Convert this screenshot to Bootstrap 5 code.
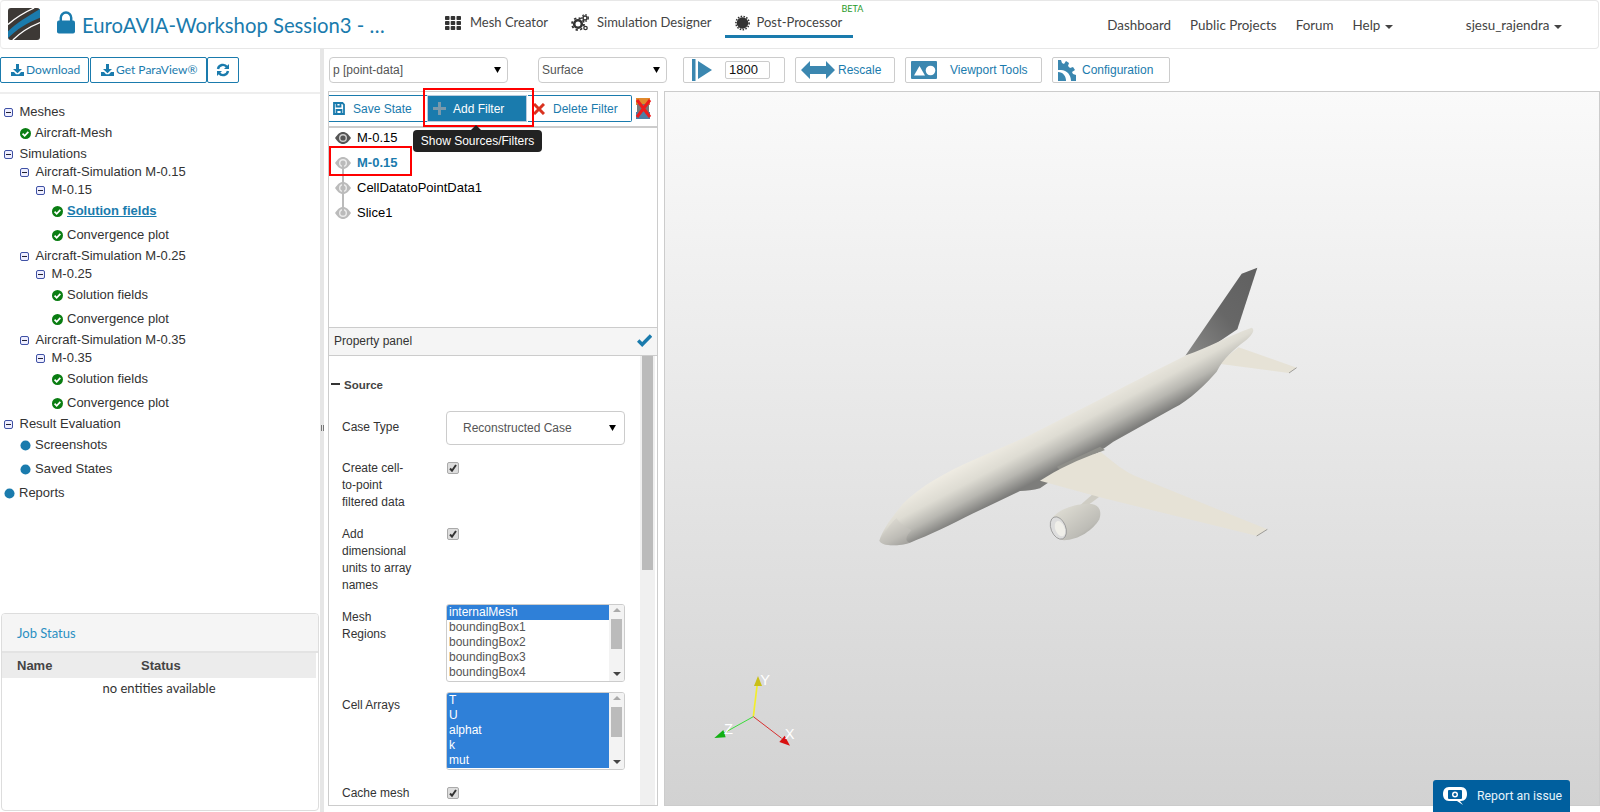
<!DOCTYPE html>
<html lang="en">
<head>
<meta charset="utf-8">
<title>Post-Processor</title>
<link href="https://cdn.jsdelivr.net/npm/bootstrap@5.3.0/dist/css/bootstrap.min.css" rel="stylesheet">
<style>
:root{--brand:#1a7bad;--ico:#3b87b0;}
html,body{height:100%;}
body{font-family:"Liberation Sans",Arial,sans-serif;font-size:13px;color:#333;background:#fff;overflow:hidden;}
svg{display:block;flex:none;}
.appbar{height:49px;padding:0;border:1px solid #e7e7e7;border-left-color:#eee;border-radius:4px;margin-right:1px;font-family:Lato,sans-serif;font-size:13px;color:#444;flex-wrap:nowrap;justify-content:flex-start;align-items:flex-start;}
.appbar>*{flex:none;}
.logo-box{margin:7px 0 0 7px;}
.lock-box{margin:10px 0 0 17px;}
.app-title{margin:8px 0 0 7px;width:363px;font-size:20.3px;line-height:32px;color:var(--brand);white-space:nowrap;}
.mod{display:flex;align-items:center;height:37px;padding:7px 0 0;color:#444;text-decoration:none;position:relative;white-space:nowrap;}
.mod-a{gap:9px;}
.mod-b{margin-left:23px;gap:8px;}
.mod-c{margin-left:13px;padding:10px 11px 0 10px;border-bottom:3px solid var(--brand);gap:7px;}
.beta{position:absolute;left:117px;top:3px;font-size:9px;line-height:10px;color:#2a9a2a;}
.rnav{display:flex;gap:19px;margin-left:254px;padding-top:15px;line-height:18px;font-size:13.4px;}
.rnav a{color:#444;text-decoration:none;white-space:nowrap;}
.user{margin-left:72.5px;padding-top:15px;line-height:18px;white-space:nowrap;font-size:13.4px;}
.car{display:inline-block;border:4px solid transparent;border-top-color:#444;border-bottom:0;margin-left:5px;vertical-align:middle;}
.main-wrap{height:763px;}
.side{width:320px;flex:none;}
.side-tools{height:45px;border-bottom:2px solid #eee;padding-top:8px;gap:1px;}
.sbtn{height:26px;padding:0 0 0 10px;font-family:Lato,sans-serif;font-size:12px;line-height:24px;color:var(--brand);border:1px solid var(--brand);border-radius:2px;display:flex;align-items:center;gap:2px;background:#fff;}
.sbtn-a{width:89px;}
.sbtn-b{width:117px;}
.sbtn-c{width:32px;margin-left:-1px;padding-left:8px;}
.treebox{padding-top:9px;}
.folder,.leaf{display:flex;align-items:center;white-space:nowrap;}
.folder{height:18px;}
.leaf{height:24px;}
.l0{padding-left:4px;}
.l1{padding-left:20px;}
.l2{padding-left:36px;}
.l3{padding-left:52px;}
.folder svg{margin-right:6.500px;}
.leaf svg{margin-right:4px;}
.cur{font-weight:700;color:var(--brand);text-decoration:underline;margin-left:-4px;padding-left:4px;}
.jobs{height:198px;margin:auto 0 1px 1px;width:318px;border:1px solid #ddd;border-radius:4px;overflow:hidden;}
.jobs-h{height:39px;background:#f5f5f5;border-bottom:2px solid #e3e3e3;color:#2b8fc2;font-family:Lato,sans-serif;font-size:13px;line-height:38px;padding-left:15px;}
.jobs-th{height:25px;background:#ececec;font-weight:700;color:#444;line-height:25px;padding-left:15px;margin-right:2px;}
.jobs-th span{display:inline-block;width:124px;}
.jobs-td{text-align:center;font-family:Lato,sans-serif;font-size:13px;line-height:18px;color:#333;padding-top:1px;margin-right:2px;}
.strip{width:4px;flex:none;background:#e6e6e6;display:flex;align-items:center;justify-content:center;}
.strip i{display:block;width:3px;height:6px;border-left:1px solid #777;border-right:1px solid #777;margin-top:-5px;}
.work{margin-left:4px;min-width:0;}
.top-tools{height:42px;padding-top:8px;margin-left:1px;}
.wsel{height:26px;border:1px solid #ccc;border-radius:4px;font-size:12px;color:#555;padding:0 0 0 3px;background-position:right 6px center;background-size:7px 6px;box-shadow:none;}
.wsel-a{width:179px;}
.wsel-b{width:129px;margin-left:30px;}
.form-select{background-image:url("data:image/svg+xml,%3Csvg xmlns='http://www.w3.org/2000/svg' viewBox='0 0 8 7'%3E%3Cpath d='M0 0h8L4 7z'/%3E%3C/svg%3E");}
.tbtn{height:26px;border:1px solid #ccc;border-radius:2px;background:#fff;display:flex;align-items:center;font-size:12px;color:var(--brand);white-space:nowrap;}
.tb-a{width:102px;margin-left:16px;padding-left:8px;}
.tb-b{width:100px;margin-left:10px;padding-left:5px;gap:3px;}
.tb-c{width:137px;margin-left:10px;padding-left:5px;gap:13px;}
.tb-d{width:118px;margin-left:10px;padding-left:5px;gap:4px;}
.num{width:45px;height:18px;margin-left:13px;border:1px solid #ccc;border-radius:2px;font-size:13px;line-height:16px;color:#111;padding-left:3px;}
.stage{height:715px;position:relative;}
.filters{width:330px;flex:none;border:1px solid #ccc;}
.ftools{height:36px;border-bottom:2px solid #ccc;padding-top:3px;}
.fb{height:27px;display:flex;align-items:center;font-size:12px;color:var(--brand);border:1px solid var(--brand);white-space:nowrap;padding:0;}
.fb-a{width:98px;border-width:1px 0;padding-left:4px;gap:8px;}
.fb-b{width:100px;background:var(--brand);color:#fff;padding-left:5px;gap:7px;border-color:#bcd;}
.fb-c{width:104px;margin-left:1px;padding-left:5px;gap:8px;border-left:0;border-radius:0 2px 2px 0;}
.fb-x{margin-left:3px;margin-top:3px;}
.flist{height:202px;margin-top:-3px;position:relative;}
.fitem{height:25px;display:flex;align-items:center;gap:6px;padding-left:6px;color:#000;position:relative;}
.fitem-cur{font-weight:700;color:var(--brand);}
.flink{position:absolute;left:13px;top:37px;height:50px;width:2px;background:#bbb;}
.ph{height:29px;background:#f5f5f5;border-top:1px solid #ccc;border-bottom:1px solid #ccc;font-size:12px;line-height:27px;color:#333;padding:0 5px;}
.ph svg{margin-top:6px;}
.pscroll{height:449px;overflow:hidden;position:relative;padding-right:16px;}
.vbar{position:absolute;right:2px;top:0;bottom:0;width:15px;background:#f0f0f0;}
.vbar i{display:block;margin-left:2px;width:11px;height:214px;background:#bbb;}
.src{font-weight:700;font-size:11.5px;color:#444;padding:20px 0 0 2px;height:55px;line-height:18px;display:flex;align-items:flex-start;gap:4px;}
.src i{display:block;width:9px;height:2px;background:#333;margin-top:7px;}
.prow{display:flex;padding-left:13px;font-size:12px;line-height:17px;color:#333;}
.plab{width:104px;flex:none;padding:1px 32px 0 0;margin-bottom:-1px;}
.pval{width:179px;flex:none;}
.psel{height:34px;width:179px;font-size:12px;color:#555;border:1px solid #ccc;border-radius:4px;padding:0 0 0 16px;background-position:right 8px center;background-size:7px 6px;}
.r-case{margin-bottom:14px;}
.r-case .plab{padding-top:8px;}
.r-chk1{margin-bottom:15px;}
.r-chk2{margin-bottom:11px;}
.r-mesh{margin-bottom:10px;}
.r-mesh .plab{padding-top:5px;}
.r-cell{margin-bottom:14px;}
.r-cell .plab{padding-top:5px;}
.form-check-input.tick,.form-check-input.tick:checked{width:12px;height:12px;margin:3px 0 0 1px;border:1px solid #aaa;border-radius:2px;background-color:#ddd;background-size:12px 12px;background-image:url("data:image/svg+xml,%3Csvg xmlns='http://www.w3.org/2000/svg' viewBox='0 0 12 12'%3E%3Cpath d='M3 6.500l2 2.200L9 3' fill='none' stroke='%23333' stroke-width='2'/%3E%3C/svg%3E");display:block;}
.lbox{height:78px;border:1px solid #ccc;border-radius:3px;position:relative;overflow:hidden;font-size:12px;line-height:15px;color:#555;padding-right:15px;}
.lbox div{padding-left:2px;height:15px;}
.lbox .on{background:#2f80d8;color:#fff;}
.lsb{position:absolute;right:0;top:0;bottom:0;width:15px;background:#f3f3f3;}
.lsb b{position:absolute;left:2px;top:14px;width:11px;height:30px;background:#bbb;}
.lsb i{position:absolute;left:4px;border:4px solid transparent;}
.lsb .up{top:3px;border-bottom-color:#aaa;border-top:0;}
.lsb .dn{bottom:5px;border-top-color:#444;border-bottom:0;}
.view{margin-left:6px;width:936px;flex:none;border:1px solid #ccc;position:relative;background:linear-gradient(#fafafa,#d2d2d2);overflow:hidden;}
.plane{position:absolute;left:175px;top:148px;}
.axes{position:absolute;left:15px;top:558px;}
.redbox{position:absolute;border:2px solid #f00;pointer-events:none;}
.rb-a{left:95px;top:-3px;width:111px;height:39px;}
.rb-b{left:1px;top:55px;width:83px;height:30px;}
.tipx{position:absolute;left:85px;top:39px;width:129px;height:22px;border-radius:4px;background:#222;color:#fff;font-size:12px;line-height:22px;text-align:center;}
.tipx::before{content:"";position:absolute;left:58px;top:-5px;border:5px solid transparent;border-top:0;border-bottom-color:#222;}
.report{position:absolute;left:1433px;top:780px;width:137px;height:32px;background:#005f9e;border-radius:3px 3px 0 0;color:#e6f3fb;font-family:Roboto,sans-serif;font-size:12.3px;display:flex;align-items:center;gap:10px;padding-left:10px;}
</style>
</head>
<body>
<nav class="navbar bg-white appbar">
  <div class="logo-box">
    <svg width="32" height="32" viewBox="0 0 33 33"><rect width="33" height="33" rx="3" fill="#3d3936"/><path d="M0 24C9 15 20 9 33 1V10C20 15 9 22 0 31Z" fill="#1a7bad"/><path d="M0 17C8 10 16 5 27 0" stroke="#fff" stroke-width="1.400" fill="none"/><path d="M5 33C13 25 23 19 33 15" stroke="#fff" stroke-width="1.400" fill="none"/></svg>
  </div>
  <div class="lock-box">
    <svg width="18" height="23" viewBox="0 0 19 23"><path d="M4 11V6.500a5.500 5.500 0 0 1 11 0V11" fill="none" stroke="#1a7bad" stroke-width="2.600"/><rect y="9.500" width="19" height="13.500" rx="2" fill="#1a7bad"/></svg>
  </div>
  <div class="app-title">EuroAVIA-Workshop Session3 - …</div>
  <a class="mod mod-a" href="#">
    <svg width="16" height="14" viewBox="0 0 16 14" fill="#333"><rect width="4.500" height="4" rx=".8"/><rect x="5.700" width="4.500" height="4" rx=".8"/><rect x="11.500" width="4.500" height="4" rx=".8"/><rect y="5" width="4.500" height="4" rx=".8"/><rect x="5.700" y="5" width="4.500" height="4" rx=".8"/><rect x="11.500" y="5" width="4.500" height="4" rx=".8"/><rect y="10" width="4.500" height="4" rx=".8"/><rect x="5.700" y="10" width="4.500" height="4" rx=".8"/><rect x="11.500" y="10" width="4.500" height="4" rx=".8"/></svg>
    Mesh Creator</a>
  <a class="mod mod-b" href="#">
    <svg width="18" height="18" viewBox="0 0 18 18" fill="none" stroke="#333"><circle cx="7" cy="10" r="3.800" stroke-width="2.600"/><circle cx="7" cy="10" r="6" stroke-width="1.800" stroke-dasharray="2.300 2.400"/><circle cx="14" cy="4" r="2" stroke-width="1.500"/><circle cx="14" cy="4" r="3.300" stroke-width="1.300" stroke-dasharray="1.500 1.600"/><circle cx="14.500" cy="14" r="1.700" stroke-width="1.300"/></svg>
    Simulation Designer</a>
  <a class="mod mod-c" href="#">
    <svg width="15" height="16" viewBox="0 0 15 16"><circle cx="7.500" cy="8" r="5.800" fill="#333"/><circle cx="7.500" cy="8" r="6.600" fill="none" stroke="#333" stroke-width="1.600" stroke-dasharray="1.500 1.400"/></svg>
    Post-Processor<span class="beta">BETA</span></a>
  <div class="rnav"><a href="#">Dashboard</a><a href="#">Public Projects</a><a href="#">Forum</a><a href="#">Help<span class="car"></span></a></div>
  <div class="user">sjesu_rajendra<span class="car"></span></div>
</nav>

<svg width="0" height="0" class="position-absolute">
  <symbol id="mn" viewBox="0 0 9 9"><rect x=".5" y=".5" width="8" height="8" rx="1.500" fill="#eef" stroke="#3f51a5"/><path d="M2 4.500h5" stroke="#223" stroke-width="1"/></symbol>
  <symbol id="ok" viewBox="0 0 12 12"><circle cx="6" cy="6" r="6" fill="#0a7d12"/><path d="M2.800 6.200l2.300 2.300 4-4.300" fill="none" stroke="#fff" stroke-width="1.900"/></symbol>
  <symbol id="dot" viewBox="0 0 12 12"><circle cx="6" cy="6" r="5.500" fill="#1a7bad"/></symbol>
  <symbol id="dl" viewBox="0 0 13 12"><path d="M5 0h3v5h3L6.500 9.300 2 5h3z" fill="#1a7bad"/><path d="M0 8h3l2 2.300h3L10 8h3v4H0z" fill="#1a7bad"/></symbol>
  <symbol id="eye" viewBox="0 0 16 14"><path d="M0 7C3 2.500 5.500 1 8 1s5 1.500 8 6c-3 4.500-5.500 6-8 6S3 11.500 0 7z" fill="currentColor"/><circle cx="8" cy="7" r="4" fill="#fff" opacity=".7"/><circle cx="8" cy="7" r="2.600" fill="currentColor"/></symbol>
</svg>

<div class="d-flex main-wrap">
  <aside class="side d-flex flex-column">
    <div class="side-tools d-flex">
      <button class="sbtn sbtn-a" type="button"><svg width="13" height="12"><use href="#dl"/></svg>Download</button>
      <button class="sbtn sbtn-b" type="button"><svg width="13" height="12"><use href="#dl"/></svg>Get ParaView®</button>
      <button class="sbtn sbtn-c" type="button"><svg width="14" height="14" viewBox="0 0 14 14" fill="none" stroke="#1a7bad" stroke-width="2.400"><path d="M2 6a5 5 0 0 1 9-2"/><path d="M12 8a5 5 0 0 1-9 2"/><path d="M13 1v5H8z" fill="#1a7bad" stroke="none"/><path d="M1 13V8h5z" fill="#1a7bad" stroke="none"/></svg></button>
    </div>
    <div class="treebox">
      <div class="folder l0"><svg width="9" height="9"><use href="#mn"/></svg>Meshes</div>
      <div class="leaf l1"><svg width="11" height="11"><use href="#ok"/></svg>Aircraft-Mesh</div>
      <div class="folder l0"><svg width="9" height="9"><use href="#mn"/></svg>Simulations</div>
      <div class="folder l1"><svg width="9" height="9"><use href="#mn"/></svg>Aircraft-Simulation M-0.15</div>
      <div class="folder l2"><svg width="9" height="9"><use href="#mn"/></svg>M-0.15</div>
      <div class="leaf l3"><svg width="11" height="11"><use href="#ok"/></svg><span class="cur">Solution fields</span></div>
      <div class="leaf l3"><svg width="11" height="11"><use href="#ok"/></svg>Convergence plot</div>
      <div class="folder l1"><svg width="9" height="9"><use href="#mn"/></svg>Aircraft-Simulation M-0.25</div>
      <div class="folder l2"><svg width="9" height="9"><use href="#mn"/></svg>M-0.25</div>
      <div class="leaf l3"><svg width="11" height="11"><use href="#ok"/></svg>Solution fields</div>
      <div class="leaf l3"><svg width="11" height="11"><use href="#ok"/></svg>Convergence plot</div>
      <div class="folder l1"><svg width="9" height="9"><use href="#mn"/></svg>Aircraft-Simulation M-0.35</div>
      <div class="folder l2"><svg width="9" height="9"><use href="#mn"/></svg>M-0.35</div>
      <div class="leaf l3"><svg width="11" height="11"><use href="#ok"/></svg>Solution fields</div>
      <div class="leaf l3"><svg width="11" height="11"><use href="#ok"/></svg>Convergence plot</div>
      <div class="folder l0"><svg width="9" height="9"><use href="#mn"/></svg>Result Evaluation</div>
      <div class="leaf l1"><svg width="11" height="11"><use href="#dot"/></svg>Screenshots</div>
      <div class="leaf l1"><svg width="11" height="11"><use href="#dot"/></svg>Saved States</div>
      <div class="leaf l0"><svg width="11" height="11"><use href="#dot"/></svg>Reports</div>
    </div>
    <div class="jobs">
      <div class="jobs-h">Job Status</div>
      <div class="jobs-th"><span>Name</span>Status</div>
      <div class="jobs-td">no entities available</div>
    </div>
  </aside>
  <div class="strip"><i></i></div>
  <div class="work flex-grow-1">
    <div class="top-tools d-flex">
      <select class="form-select wsel wsel-a"><option>p [point-data]</option></select>
      <select class="form-select wsel wsel-b"><option>Surface</option></select>
      <div class="tbtn tb-a">
        <svg width="20" height="22" viewBox="0 0 20 22" fill="#3b87b0"><rect width="3.500" height="22"/><path d="M6 2l14 9L6 20z"/></svg>
        <span class="num">1800</span>
      </div>
      <div class="tbtn tb-b">
        <svg width="34" height="18" viewBox="0 0 34 18" fill="#3b87b0"><path d="M0 9L9 0v5h16V0l9 9-9 9v-5H9v5z"/></svg>Rescale
      </div>
      <div class="tbtn tb-c">
        <svg width="26" height="18" viewBox="0 0 26 18"><rect width="26" height="18" rx="1" fill="#3b87b0"/><path d="M3 14.500L8.500 5l5.500 9.500z" fill="#fff"/><circle cx="19.500" cy="9.500" r="4.800" fill="#fff"/></svg>Viewport Tools
      </div>
      <div class="tbtn tb-d">
        <svg width="20" height="21" viewBox="0 0 20 21" fill="#3b87b0"><path d="M0 0h3l1 3 2 1 2-3 3 2-1 3 2 2 3-1 2 3-3 2 1 2 3 1v3 3h-5c0-6-4-11-10-11H0V0z"/><path d="M0 12c5 0 8 4 8 9H0z"/></svg>Configuration
      </div>
    </div>
    <div class="stage d-flex">
      <section class="filters">
        <div class="ftools d-flex">
          <div class="fb fb-a"><svg width="12" height="13" viewBox="0 0 12 13" fill="none" stroke="#1a7bad" stroke-width="1.800"><path d="M1 1h8.500L11 2.500V12H1z"/><path d="M3.500 1v3.500h4V1M3.500 12V8h5v4"/></svg>Save State</div>
          <div class="fb fb-b"><svg width="13" height="13" viewBox="0 0 13 13" fill="#7a99ab"><path d="M5 0h3v5h5v3H8v5H5V8H0V5h5z"/></svg>Add Filter</div>
          <div class="fb fb-c"><svg width="12" height="12" viewBox="0 0 12 12" stroke="#d9321f" stroke-width="3"><path d="M1 1l10 10M11 1L1 11"/></svg>Delete Filter</div>
          <svg class="fb-x" width="17" height="21" viewBox="0 0 17 21"><rect x="1" y="0" width="14" height="7" fill="#e08a2c"/><rect x="2" y="6" width="12" height="9" fill="#777"/><rect x="1" y="14" width="14" height="7" fill="#4d7fa5"/><path d="M2 2l13 17M15 2L2 19" stroke="#ee1c1c" stroke-width="3"/></svg>
        </div>
        <div class="flist">
          <div class="fitem"><svg width="16" height="14"><use href="#eye" color="#555"/></svg>M-0.15</div>
          <div class="fitem fitem-cur"><svg width="16" height="14"><use href="#eye" color="#bbb"/></svg>M-0.15</div>
          <div class="fitem"><svg width="16" height="14"><use href="#eye" color="#bbb"/></svg>CellDatatoPointData1</div>
          <div class="fitem"><svg width="16" height="14"><use href="#eye" color="#bbb"/></svg>Slice1</div>
          <span class="flink"></span>
        </div>
        <div class="ph d-flex justify-content-between">Property panel
          <svg width="15" height="13" viewBox="0 0 15 13" fill="none" stroke="#1a7bad" stroke-width="3.400"><path d="M1.200 6.500l4 4L14 1.500"/></svg>
        </div>
        <div class="pscroll">
          <div class="vbar"><i></i></div>
          <div class="src"><i></i>Source</div>
          <div class="prow r-case"><div class="plab">Case Type</div><div class="pval"><select class="form-select psel"><option>Reconstructed Case</option></select></div></div>
          <div class="prow r-chk1"><div class="plab">Create cell-to-point filtered data</div><div class="pval"><input class="form-check-input tick" type="checkbox" checked></div></div>
          <div class="prow r-chk2"><div class="plab">Add dimensional units to array names</div><div class="pval"><input class="form-check-input tick" type="checkbox" checked></div></div>
          <div class="prow r-mesh"><div class="plab">Mesh Regions</div><div class="pval"><div class="lbox"><div class="on">internalMesh</div><div>boundingBox1</div><div>boundingBox2</div><div>boundingBox3</div><div>boundingBox4</div><span class="lsb"><i class="up"></i><b></b><i class="dn"></i></span></div></div></div>
          <div class="prow r-cell"><div class="plab">Cell Arrays</div><div class="pval"><div class="lbox"><div class="on">T</div><div class="on">U</div><div class="on">alphat</div><div class="on">k</div><div class="on">mut</div><span class="lsb"><i class="up"></i><b></b><i class="dn"></i></span></div></div></div>
          <div class="prow"><div class="plab">Cache mesh</div><div class="pval"><input class="form-check-input tick" type="checkbox" checked></div></div>
        </div>
      </section>
      <section class="view">
        <svg class="plane" width="480" height="340" viewBox="0 0 1440 1020">
          <defs>
            <linearGradient id="body" gradientUnits="userSpaceOnUse" x1="640" y1="530" x2="725" y2="690"><stop offset="0" stop-color="#eeebe2"/><stop offset=".3" stop-color="#dedcd3"/><stop offset=".55" stop-color="#b8b7b1"/><stop offset=".8" stop-color="#7d7d7b"/></linearGradient>
            <linearGradient id="fin" x1="0" y1="1" x2="1" y2="0"><stop offset="0" stop-color="#8b8b89"/><stop offset=".5" stop-color="#676767"/><stop offset="1" stop-color="#606060"/></linearGradient>
            <linearGradient id="nac" x1="0" y1="0" x2="1" y2="1"><stop offset="0" stop-color="#e6e4da"/><stop offset=".7" stop-color="#bdbcb6"/><stop offset="1" stop-color="#8d8d88"/></linearGradient>
          </defs>
          <path d="M1036 347L1205 101 1252 83 1192 268 1100 330z" fill="url(#fin)"/>
          <path d="M1140 366L1196 322 1370 383 1347 399 1142 372z" fill="#e6e2d6"/>
          <path d="M690 822L758 763 778 770 722 812z" fill="#cfcdc4"/>
          <path d="M634 836C660 805 705 790 755 792 778 795 786 815 778 838 760 870 715 900 672 901 645 898 628 870 634 836z" fill="url(#nac)"/>
          <ellipse cx="655" cy="864" rx="22" ry="35" transform="rotate(-22 655 864)" fill="#ddd" stroke="#888" stroke-width="2"/>
          <ellipse cx="660" cy="866" rx="14" ry="24" transform="rotate(-22 660 866)" fill="#f0efe9"/>
          <path d="M118 902C128 870 150 838 190 790 240 740 320 695 400 660L560 590 800 468C900 415 980 375 1040 345 1100 325 1170 285 1235 263 1245 268 1240 282 1215 303 1180 330 1150 355 1130 395 1100 430 1050 480 1000 505L820 605C760 650 660 700 600 745 580 752 560 752 540 753L400 820C330 855 270 885 210 908 170 920 125 918 118 902z" fill="url(#body)"/>
          <path d="M118 902C135 880 150 850 170 835 178 850 195 860 215 870 195 890 195 905 210 908 170 920 125 918 118 902z" fill="#c9c7bf" opacity=".35"/>
          <path d="M650 680L780 620 795 630 770 640 660 690z" fill="#8f8f8a"/>
          <path d="M600 722C650 690 720 655 782 636 820 665 850 695 895 712L1282 868 1252 888 780 772 600 722z" fill="#e6e2d6"/>
          <path d="M1250 888L1282 868" stroke="#555" stroke-width="1.500"/>
          <path d="M1347 399L1370 383" stroke="#555" stroke-width="1.500"/>
        </svg>
        <svg class="axes" width="160" height="130" viewBox="0 0 480 390">
          <path d="M220 200L232 100" stroke="#f2ee2c" stroke-width="5"/>
          <path d="M234 78L246 108 222 108z" fill="#c9bf18"/>
          <path d="M220 200L130 250" stroke="#3bdc3b" stroke-width="3"/>
          <path d="M103 264L130 240 137 262z" fill="#12b012"/>
          <path d="M220 200L305 265" stroke="#d83030" stroke-width="3"/>
          <path d="M330 287L298 276 314 257z" fill="#d81010"/>
          <text x="241" y="104" fill="#fff" font-size="44" font-family="Liberation Sans">Y</text>
          <text x="132" y="252" fill="#fff" font-size="44" font-family="Liberation Sans">Z</text>
          <text x="314" y="268" fill="#fff" font-size="44" font-family="Liberation Sans">X</text>
        </svg>
      </section>
      <div class="redbox rb-a"></div>
      <div class="redbox rb-b"></div>
      <div class="tipx">Show Sources/Filters</div>
    </div>
  </div>
</div>
<div class="report">
  <svg width="24" height="20" viewBox="0 0 24 20"><path d="M6 1h12c4 0 6 3 6 7s-2 7-6 7h-1l3 4-6-4H6c-4 0-6-3-6-7s2-7 6-7z" fill="#fff"/><rect x="5" y="4" width="14" height="9" rx="1" fill="#005f9e"/><circle cx="12" cy="8.500" r="3" fill="#fff"/><circle cx="12" cy="8.500" r="1.500" fill="#005f9e"/></svg>
  Report an issue
</div>
<script src="https://cdn.jsdelivr.net/npm/bootstrap@5.3.0/dist/js/bootstrap.bundle.min.js"></script>
</body>
</html>
